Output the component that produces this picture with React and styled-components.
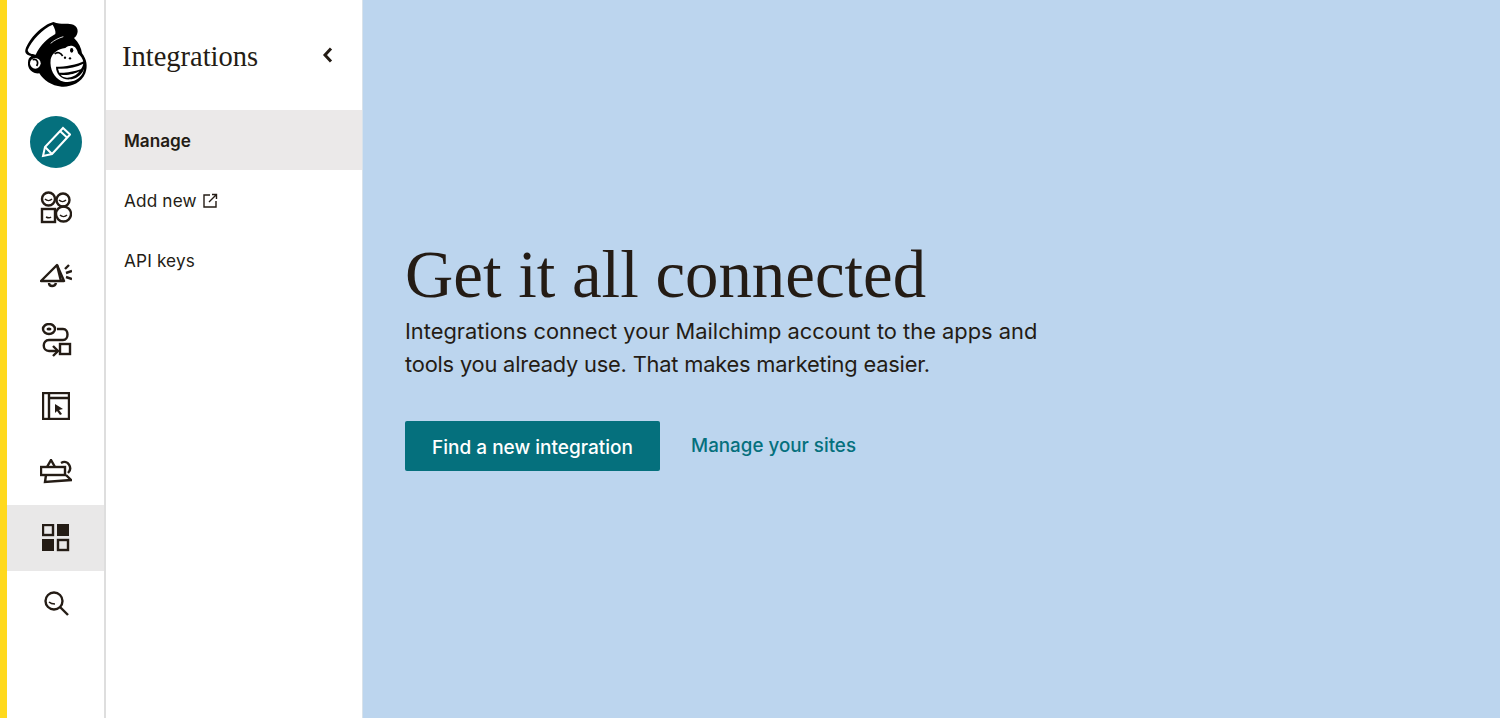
import React from "react";
import styled, { createGlobalStyle } from "styled-components";

const GlobalStyle = createGlobalStyle`
  html, body, #root {
    margin: 0;
    height: 100%;
  }
  body {
    font-family: Inter, "Liberation Sans", sans-serif;
    color: #241c15;
  }
`;

const Page = styled.div`
  display: flex;
  height: 718px;
  overflow: hidden;
  border-left: 7px solid #ffd91d;
`;

const Rail = styled.nav`
  width: 97px;
  flex-shrink: 0;
  border-right: 2px solid #dedede;
  background: #fff;
  display: flex;
  flex-direction: column;
`;

const LogoRow = styled.div`
  height: 109px;
  display: flex;
  justify-content: center;
  padding-top: 16px;
  box-sizing: border-box;
`;

const RailItem = styled.div`
  height: 66px;
  display: flex;
  align-items: center;
  justify-content: center;
  background: ${(p) => (p.$active ? "#e9e8e8" : "transparent")};
`;

const PencilCircle = styled.div`
  width: 52px;
  height: 52px;
  border-radius: 50%;
  background: #05707d;
  display: flex;
  align-items: center;
  justify-content: center;
`;

const Panel = styled.aside`
  width: 256px;
  flex-shrink: 0;
  border-right: 1px solid #d8e2ea;
  background: #fff;
`;

const PanelHeader = styled.div`
  height: 110px;
  box-sizing: border-box;
  padding: 41px 28px 0 16px;
  display: flex;
  justify-content: space-between;
  align-items: flex-start;
`;

const PanelTitle = styled.h2`
  margin: 0;
  font-family: "Liberation Serif", serif;
  font-weight: 400;
  font-size: 28.5px;
  line-height: 32px;
`;

const ChevronSlot = styled.span`
  display: flex;
  margin-top: 5px;
`;

const NavItem = styled.div`
  height: 60px;
  box-sizing: border-box;
  padding: 1px 0 0 18px;
  display: flex;
  align-items: center;
  gap: 6px;
  font-size: 17.2px;
  letter-spacing: ${(p) => (p.$active ? 0 : 0.15)}px;
  font-weight: ${(p) => (p.$active ? 600 : 400)};
  background: ${(p) => (p.$active ? "#ebe9e9" : "transparent")};
`;

const Main = styled.main`
  flex: 1;
  background: #bcd5ee;
  display: flex;
  flex-direction: column;
  justify-content: center;
  padding: 0 0 12px 42px;
`;

const Heading = styled.h1`
  margin: 2px 0 5px;
  font-family: "Liberation Serif", serif;
  font-weight: 400;
  font-size: 66.8px;
  line-height: 72px;
`;

const Lead = styled.p`
  margin: 0 0 40px;
  font-size: 21.85px;
  line-height: 33px;
`;

const LeadLine = styled.span`
  display: block;
  letter-spacing: ${(p) => p.$tracking || 0}px;
`;

const Actions = styled.div`
  display: flex;
  align-items: center;
  gap: 31px;
`;

const PrimaryButton = styled.button`
  width: 255px;
  height: 50px;
  border: 0;
  border-radius: 2px;
  padding: 3px 0 0;
  background: #05707d;
  color: #fff;
  font-family: inherit;
  font-size: 19px;
  font-weight: 500;
`;

const TextLink = styled.a`
  color: #05707d;
  font-size: 18.8px;
  font-weight: 500;
`;

const Freddie = () => (
  <svg width="72" height="76" viewBox="0 0 216 228">
    <path d="M16 102C26 68 68 26 100 18C125 28 140 20 160 26C178 34 176 56 162 66C176 80 184 95 186 112C200 130 204 150 196 172C184 202 150 214 125 212C95 210 70 192 58 172C40 174 22 160 24 140C24 130 28 124 34 120C22 118 14 112 16 102Z" fill="#000" />
    <path d="M23 102C36 72 68 38 98 26C104 36 108 46 106 54C84 66 60 88 47 116C36 116 25 112 23 102Z" fill="#fff" />
    <path d="M92 82C104 72 116 66 130 62" fill="none" stroke="#fff" strokeWidth="2.5" />
    <circle cx="46" cy="142" r="16" fill="#fff" />
    <path d="M38 131C50 127 57 138 50 150" fill="none" stroke="#000" strokeWidth="5" />
    <path d="M92 130C96 112 114 98 136 96C150 84 170 88 174 112C190 126 198 150 188 172C176 195 145 204 122 194C104 186 88 160 92 130Z" fill="#fff" />
    <path d="M108 152C135 152 170 146 194 134C200 160 180 188 150 190C125 192 108 175 108 152Z" fill="#000" />
    <path d="M114 158C140 160 168 154 190 143C188 150 186 156 182 160C160 168 130 172 118 170Z" fill="#fff" />
    <path d="M122 176C140 180 165 174 178 166C170 180 150 186 140 185C130 184 125 180 122 176Z" fill="#fff" />
    <path d="M104 114C112 106 122 110 128 120" fill="none" stroke="#000" strokeWidth="5" />
    <ellipse cx="155" cy="103" rx="5" ry="7" fill="#000" />
    <circle cx="135" cy="125" r="3.5" fill="#000" />
    <circle cx="150" cy="127" r="3.5" fill="#000" />
  </svg>
);

const Pencil = () => (
  <svg width="30" height="32" viewBox="0 0 30 32" fill="none" stroke="#fff" strokeWidth="2">
    <path d="M2 30L4 21L22 2L29 8.5L11 28Z" />
    <path d="M4 21L11 28M19 5L26 11.5" />
  </svg>
);

const line = { fill: "none", stroke: "#241c15", strokeWidth: 2.4 };

const Audience = () => (
  <svg width="32" height="34" viewBox="0 0 32 34" {...line}>
    <circle cx="8.5" cy="8" r="6.5" />
    <circle cx="23" cy="9" r="6.5" />
    <rect x="2" y="18" width="13" height="13" />
    <circle cx="23.5" cy="23" r="7.5" />
    <path d="M5 8c2 2 5 2 7 0M19 9c2 2 5 2 7 0M6 26c2 1 4 1 5 0M20 24c2 2 5 2 7 0" strokeWidth="1.5" />
  </svg>
);

const Megaphone = () => (
  <svg width="32" height="30" viewBox="0 -4 32 30" {...line}>
    <path d="M1 18L17 2L24 18Z" strokeLinejoin="round" />
    <path d="M17 2L21 18" />
    <path d="M25 6L29 2M26 10L32 8M26 14L32 16" />
    <path d="M9 20c0 4 6 4 7 0" />
  </svg>
);

const Automation = () => (
  <svg width="32" height="34" viewBox="0 0 32 34" {...line}>
    <ellipse cx="9" cy="6" rx="6" ry="5" />
    <ellipse cx="9" cy="6" rx="2.5" ry="1.5" fill="#241c15" stroke="none" />
    <path d="M17 6h6c6 0 6 11 0 11H9c-7 0-7 11 0 11h8" />
    <path d="M13 23l5 5-5 5" />
    <rect x="20" y="21" width="10" height="10" />
  </svg>
);

const Website = () => (
  <svg width="28" height="28" viewBox="0 0 28 28" {...line}>
    <rect x="1" y="1" width="26" height="26" />
    <path d="M7 1V27M7 6H27" />
    <path d="M13 12L21 17L17 18L20 22L18 23L15 19L13 21Z" fill="#241c15" stroke="none" />
  </svg>
);

const Content = () => (
  <svg width="32" height="26" viewBox="0 0 32 26" {...line}>
    <rect x="1" y="8" width="24" height="8" />
    <path d="M7 8L11 1L15 8" />
    <path d="M6 16L5 23L31 21L26 16" />
    <path d="M21 4c7-4 12 5 7 10" />
  </svg>
);

const Squares = () => (
  <svg width="28" height="28" viewBox="0 0 28 28" {...line}>
    <rect x="1" y="1" width="10" height="10" />
    <rect x="15" y="0" width="12" height="12" fill="#241c15" stroke="none" />
    <rect x="0" y="15" width="12" height="12" fill="#241c15" stroke="none" />
    <rect x="16" y="16" width="10" height="10" />
  </svg>
);

const Search = () => (
  <svg width="27" height="27" viewBox="-2 0 27 27" {...line}>
    <circle cx="10" cy="10" r="8.5" />
    <path d="M16 16L24 24" />
    <path d="M5 11c2 2 4 2 6 2" strokeWidth="1.5" />
  </svg>
);

const Chevron = () => (
  <svg width="12" height="18" viewBox="0 0 12 18" fill="none" stroke="#241c15" strokeWidth="3">
    <path d="M9 2.5L3 9L9 15.5" />
  </svg>
);

const External = () => (
  <svg width="15" height="15" viewBox="0 0 15 15" fill="none" stroke="#241c15" strokeWidth="1.4">
    <path d="M7 2H1V14H13V8" />
    <path d="M6 9L13 2M9 1.5H13.5V6" />
  </svg>
);

const railIcons = [Audience, Megaphone, Automation, Website, Content, Squares, Search];

export default function App() {
  return (
    <Page>
      <GlobalStyle />
      <Rail>
        <LogoRow>
          <Freddie />
        </LogoRow>
        <RailItem>
          <PencilCircle>
            <Pencil />
          </PencilCircle>
        </RailItem>
        {railIcons.map((Icon, i) => (
          <RailItem key={i} $active={Icon === Squares}>
            <Icon />
          </RailItem>
        ))}
      </Rail>
      <Panel>
        <PanelHeader>
          <PanelTitle>Integrations</PanelTitle>
          <ChevronSlot>
            <Chevron />
          </ChevronSlot>
        </PanelHeader>
        <NavItem $active>Manage</NavItem>
        <NavItem>
          Add new <External />
        </NavItem>
        <NavItem>API keys</NavItem>
      </Panel>
      <Main>
        <Heading>Get it all connected</Heading>
        <Lead>
          <LeadLine>Integrations connect your Mailchimp account to the apps and</LeadLine>
          <LeadLine $tracking={-0.2}>tools you already use. That makes marketing easier.</LeadLine>
        </Lead>
        <Actions>
          <PrimaryButton>Find a new integration</PrimaryButton>
          <TextLink>Manage your sites</TextLink>
        </Actions>
      </Main>
    </Page>
  );
}
